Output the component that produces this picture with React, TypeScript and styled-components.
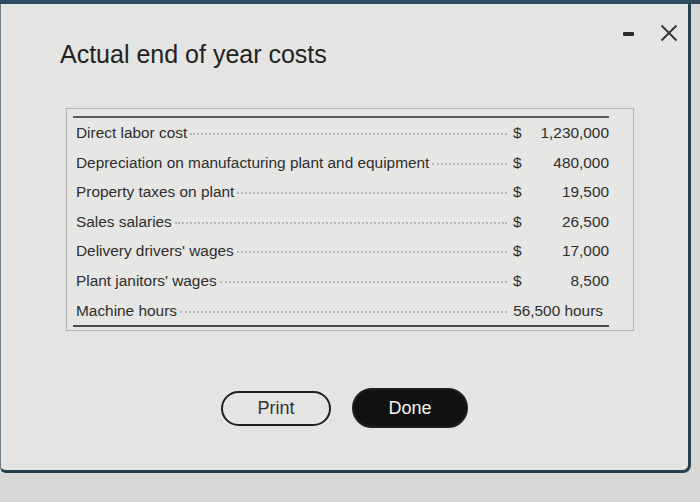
import React from 'react';
import styled, { createGlobalStyle } from 'styled-components';

const GlobalStyle = createGlobalStyle`
  html, body {
    margin: 0;
    padding: 0;
    background: #d8d8d6;
    font-family: 'Liberation Sans', Arial, sans-serif;
    color: #2b2b2b;
  }
`;

const Screen = styled.div`
  width: 700px;
  height: 502px;
  overflow: hidden;
  border-top: 4px solid #2d4c5e;
  box-sizing: border-box;
`;

const Dialog = styled.div`
  width: 691px;
  height: 469px;
  box-sizing: border-box;
  display: flex;
  flex-direction: column;
  padding-top: 17px;
  background: #e4e4e2;
  border-right: 3px solid #23404e;
  border-bottom: 3px solid #23404e;
  border-left: 1px solid #6b7c84;
  border-bottom-right-radius: 8px;
  border-bottom-left-radius: 6px;
`;

const Header = styled.div`
  display: flex;
  justify-content: space-between;
  align-items: flex-start;
`;

const Title = styled.h1`
  margin: 20px 0 0 59px;
  font-size: 25px;
  line-height: 26px;
  font-weight: 400;
  color: #222;
`;

const Controls = styled.div`
  display: flex;
  align-items: center;
  gap: 26px;
  height: 18px;
  margin: 3px 10px 0 0;
`;

const Minimize = styled.span`
  display: block;
  width: 11px;
  height: 4px;
  margin-top: 2px;
  border-radius: 1px;
  background: #2a2a2a;
`;

const CloseIcon = () => (
  <svg width="18" height="18" viewBox="0 0 18 18">
    <path d="M1.5 1.5 L16.5 16.5 M16.5 1.5 L1.5 16.5" stroke="#333" strokeWidth="1.8" fill="none" />
  </svg>
);

const Panel = styled.div`
  margin: 41px 0 0 65px;
  width: 568px;
  height: 223px;
  box-sizing: border-box;
  border: 1px solid #b5b5b3;
  padding: 7px 24px 0 6px;
  background: #e6e6e4;
`;

const Table = styled.div`
  border-top: 2px solid #5a5a5a;
  border-bottom: 2px solid #4a4a4a;
  padding-left: 3px;
`;

const Row = styled.div`
  display: grid;
  grid-template-columns: 1fr 18px 78px;
  align-items: baseline;
  height: 29.6px;
  line-height: 29.6px;
  font-size: 15.4px;
  color: #2e2e2e;
`;

const Label = styled.div`
  display: flex;
  align-items: baseline;
  white-space: nowrap;
`;

const Leader = styled.span`
  flex: 1;
  margin: 0 6px 0 3px;
  border-bottom: 2px dotted #b5b5b3;
  transform: translateY(-3px);
`;

const Dollar = styled.span`
  text-align: left;
`;

const Amount = styled.span<{ $wide?: boolean }>`
  text-align: right;
  grid-column: ${(p) => (p.$wide ? '2 / 4' : 'auto')};
  padding-right: ${(p) => (p.$wide ? '6px' : '0')};
  white-space: nowrap;
`;

const Buttons = styled.div`
  display: flex;
  justify-content: center;
  align-items: center;
  gap: 21px;
  margin-top: 57px;
`;

const Button = styled.button<{ $primary?: boolean }>`
  width: ${(p) => (p.$primary ? '116px' : '110px')};
  height: ${(p) => (p.$primary ? '40px' : '35px')};
  border-radius: 20px;
  border: 2px solid #1e1e1e;
  background: ${(p) => (p.$primary ? '#111' : 'transparent')};
  color: ${(p) => (p.$primary ? '#f4f4f4' : '#333')};
  font-family: 'Liberation Sans', Arial, sans-serif;
  font-size: 18px;
  padding: 0;
  cursor: pointer;
`;

const rows = [
  { label: 'Direct labor cost', amount: '1,230,000' },
  { label: 'Depreciation on manufacturing plant and equipment', amount: '480,000' },
  { label: 'Property taxes on plant', amount: '19,500' },
  { label: 'Sales salaries', amount: '26,500' },
  { label: "Delivery drivers' wages", amount: '17,000' },
  { label: "Plant janitors' wages", amount: '8,500' },
];

export default function App() {
  return (
    <>
      <GlobalStyle />
      <Screen>
        <Dialog>
          <Header>
            <Title>Actual end of year costs</Title>
            <Controls>
              <Minimize />
              <CloseIcon />
            </Controls>
          </Header>
          <Panel>
            <Table>
              {rows.map((r) => (
                <Row key={r.label}>
                  <Label>
                    {r.label}
                    <Leader />
                  </Label>
                  <Dollar>$</Dollar>
                  <Amount>{r.amount}</Amount>
                </Row>
              ))}
              <Row>
                <Label>
                  Machine hours
                  <Leader />
                </Label>
                <Amount $wide>56,500 hours</Amount>
              </Row>
            </Table>
          </Panel>
          <Buttons>
            <Button>Print</Button>
            <Button $primary>Done</Button>
          </Buttons>
        </Dialog>
      </Screen>
    </>
  );
}
